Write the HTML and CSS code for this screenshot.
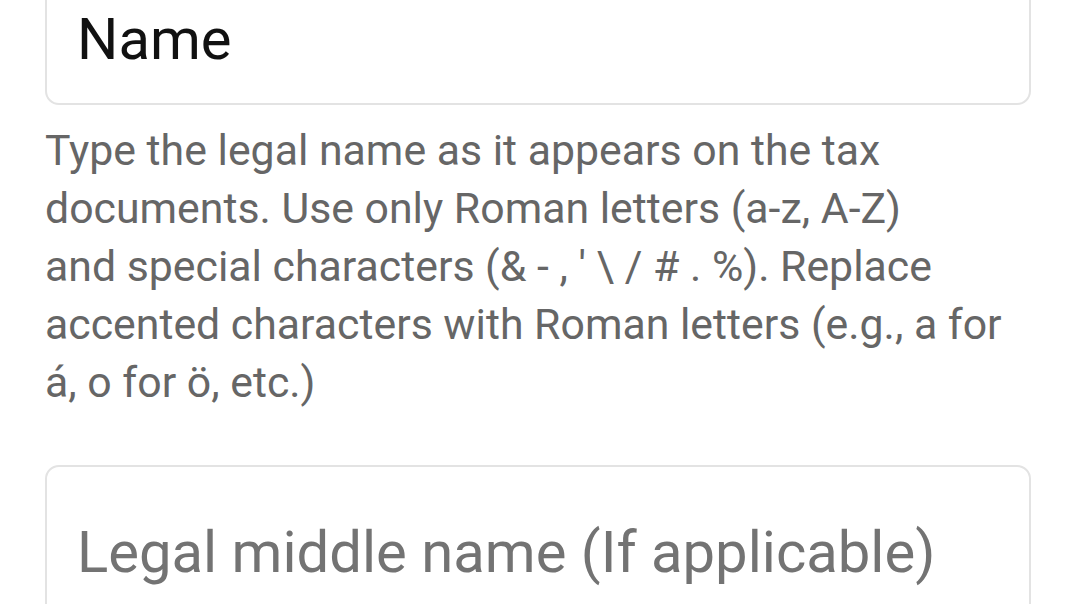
FILE: index.html
```html
<!DOCTYPE html>
<html lang="en">
<head>
  <meta charset="UTF-8">
  <meta name="viewport" content="width=device-width, initial-scale=1.0">
  <title>Tax information</title>
  <link rel="stylesheet" href="styles.css">
</head>
<body>
  <div class="form">
    <div class="field">
      <input type="text" class="field-input" value="Name">
    </div>
    <p class="hint">Type the legal name as it appears on the tax<br>
      documents. Use only Roman letters (a-z, A-Z)<br>
      and special characters (&amp; - , ' \ / # . %). Replace<br>
      accented characters with Roman letters (e.g., a for<br>
      á, o for ö, etc.)</p>

    <div class="field">
      <input type="text" class="field-input" placeholder="Legal middle name (If applicable)">
    </div>
  </div>
</body>
</html>
```

FILE: styles.css
```css
body {
  margin: 0;
  background-color: #fff;
  font-family: Roboto, "Liberation Sans", Arial, sans-serif;
  overflow: hidden;
}
.form {
  width: 986px;
  margin-left: 45px;
  margin-top: -48px;
}
.field {
  box-sizing: border-box;
  height: 153px;
  border: 2px solid #e3e3e3;
  border-radius: 14px;
  padding: 50px 28px 0 30px;
}
.field-input {
  display: block;
  width: 100%;
  border: none;
  outline: none;
  padding: 0;
  margin: 0;
  background: transparent;
  font-family: inherit;
  font-size: 58px;
  line-height: 70px;
  height: 70px;
  color: #111;
}
.field-input::placeholder {
  color: #737373;
}
.hint {
  margin: 16px 0 54px;
  font-size: 42.8px;
  line-height: 58px;
  color: #666;
}
```
